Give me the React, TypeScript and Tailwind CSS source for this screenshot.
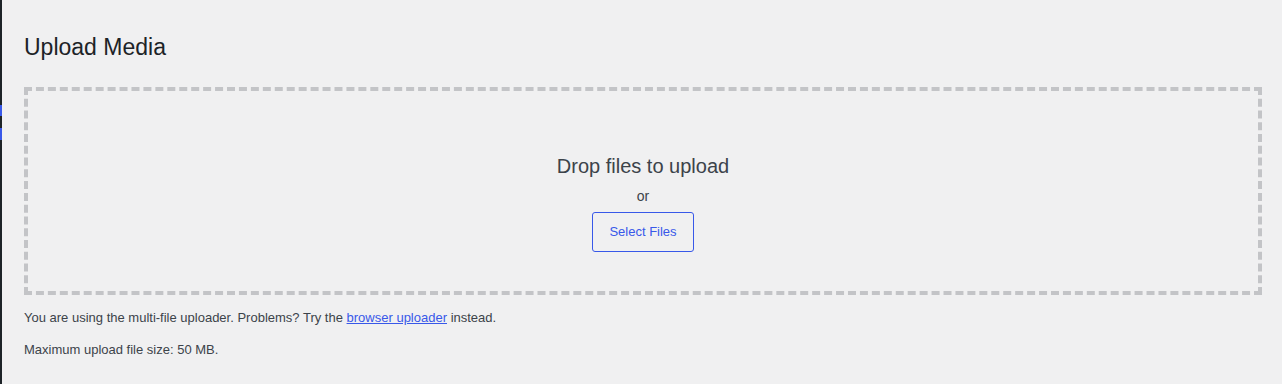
export default function App() {
  return (
    <div className="flex min-h-screen bg-[#f0f0f1] font-['Liberation_Sans',Arial,sans-serif] text-[#3c434a]">
      {/* edge of the admin menu */}
      <div className="flex w-[2px] shrink-0 flex-col bg-[#1d2327]">
        <div className="h-[105px]" />
        <div className="h-[11px] bg-[#3858e9]" />
        <div className="h-[12px]" />
        <div className="h-[12px] bg-[#3858e9]" />
      </div>

      <main className="flex-1 pl-[22px] pr-[20px]">
        <h1 className="pt-[33px] text-[23px] leading-[1.3] font-normal text-[#1d2327]">Upload Media</h1>

        <div className="mt-[24px] flex flex-col items-center border-4 border-dashed border-[#c3c4c7] pt-[60px] pb-[39px]">
          <p className="text-[20px] leading-[30px] text-[#3c434a]">Drop files to upload</p>
          <p className="mt-[5px] text-[14px] leading-[21px] text-[#3c434a]">or</p>
          <button
            type="button"
            className="mt-[5px] h-[40px] w-[102px] rounded-[3px] border border-[#3858e9] bg-[#f0f0f1] text-[13px] text-[#3858e9]"
          >
            Select Files
          </button>
        </div>

        <p className="mt-[13px] text-[13px] leading-[19.5px]">
          You are using the multi-file uploader. Problems? Try the{" "}
          <a href="#" className="text-[#3858e9] underline">
            browser uploader
          </a>{" "}
          instead.
        </p>
        <p className="mt-[13px] text-[13px] leading-[19.5px]">Maximum upload file size: 50 MB.</p>
      </main>
    </div>
  );
}
